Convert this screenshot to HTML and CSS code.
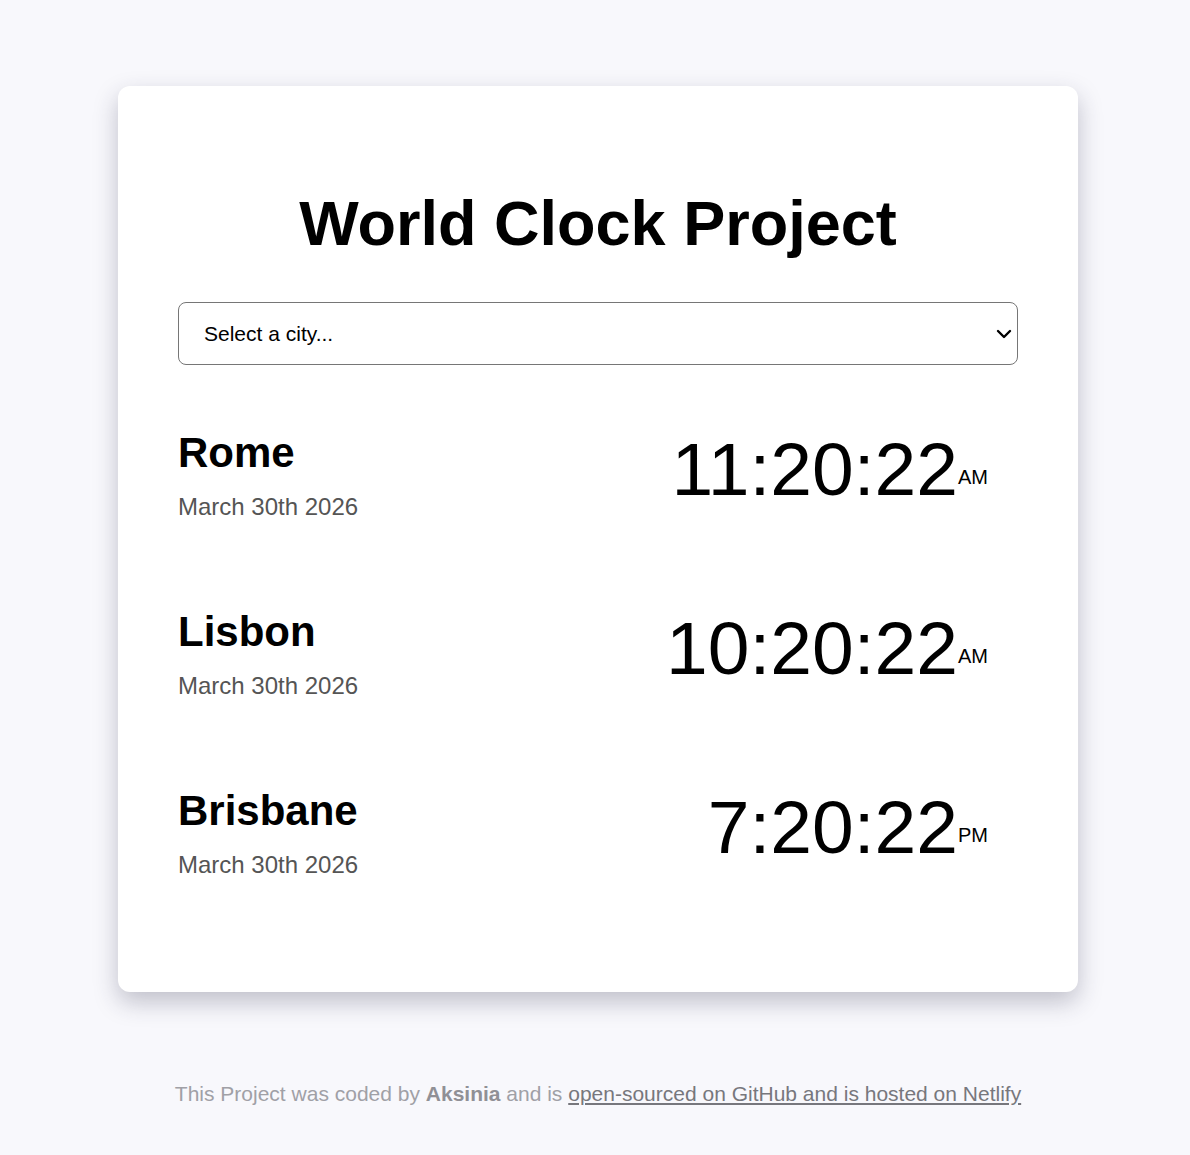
FILE: index.html
```html
<!DOCTYPE html>
<html lang="en">
<head>
<meta charset="utf-8">
<title>World Clock</title>
<link rel="stylesheet" href="styles.css">
</head>
<body>
<div class="wrap">
  <div class="card">
    <h1 class="title">World Clock Project</h1>
    <div class="select-wrap">
      <select class="city-select">
        <option>Select a city...</option>
        <option>Rome</option>
        <option>Lisbon</option>
        <option>Brisbane</option>
      </select>
      <svg class="chevron" width="16" height="10" viewBox="0 0 16 10" aria-hidden="true">
        <path d="M2 2 L8 8 L14 2" fill="none" stroke="#000" stroke-width="2.4" stroke-linecap="round" stroke-linejoin="round"/>
      </svg>
    </div>
    <div class="cities">
      <div class="city">
        <div class="city-info">
          <h2 class="city-name">Rome</h2>
          <div class="city-date">March 30th 2026</div>
        </div>
        <div class="city-time">11:20:22<small class="ampm">AM</small></div>
      </div>
      <div class="city">
        <div class="city-info">
          <h2 class="city-name">Lisbon</h2>
          <div class="city-date">March 30th 2026</div>
        </div>
        <div class="city-time">10:20:22<small class="ampm">AM</small></div>
      </div>
      <div class="city">
        <div class="city-info">
          <h2 class="city-name">Brisbane</h2>
          <div class="city-date">March 30th 2026</div>
        </div>
        <div class="city-time">7:20:22<small class="ampm">PM</small></div>
      </div>
    </div>
  </div>
  <footer class="footer">
    This Project was coded by <strong>Aksinia</strong> and is <a href="#" class="footer-link">open-sourced on GitHub and is hosted on Netlify</a>
  </footer>
</div>
</body>
</html>
```

FILE: styles.css
```css
html, body {
  margin: 0;
  padding: 0;
}
body {
  background: #f8f8fc;
  font-family: "Liberation Sans", Arial, sans-serif;
  color: #000;
}
.wrap {
  width: 960px;
  margin: 0 auto;
  padding: 86px 0 40px;
  position: relative;
  left: 3px;
}
.card {
  background: #fff;
  border-radius: 12px;
  padding: 60px 60px 113px;
  box-shadow: 0 10px 25px rgba(40, 40, 70, 0.27);
}
.title {
  font-size: 63px;
  line-height: 72px;
  font-weight: bold;
  text-align: center;
  margin: 41px 0 43px;
}
.select-wrap {
  position: relative;
  margin: 0 0 64px;
}
.city-select {
  display: block;
  width: 100%;
  height: 63px;
  box-sizing: border-box;
  border: 1px solid #767676;
  border-radius: 8px;
  background: #fff;
  font-family: "Liberation Sans", Arial, sans-serif;
  font-size: 21px;
  color: #000;
  padding: 0 40px 0 25px;
  margin: 0;
  -webkit-appearance: none;
  appearance: none;
}
.chevron {
  position: absolute;
  right: 6px;
  top: 27px;
  pointer-events: none;
}
.cities {
  display: flex;
  flex-direction: column;
  gap: 87px;
}
.city {
  display: flex;
  justify-content: space-between;
  align-items: flex-start;
}
.city-name {
  font-size: 42px;
  line-height: 48px;
  font-weight: bold;
  margin: 0 0 16px;
}
.city-date {
  font-size: 24px;
  line-height: 28px;
  color: #555;
}
.city-time {
  font-size: 75px;
  line-height: 76px;
  margin-top: 2px;
  padding-right: 30px;
  white-space: nowrap;
}
.ampm {
  font-size: 20px;
  vertical-align: 11px;
}
.footer {
  margin-top: 90px;
  text-align: center;
  font-size: 21px;
  line-height: 24px;
  color: #a0a0a6;
}
.footer strong {
  color: #909096;
}
.footer-link {
  color: #77777d;
  text-decoration: underline;
}
```
